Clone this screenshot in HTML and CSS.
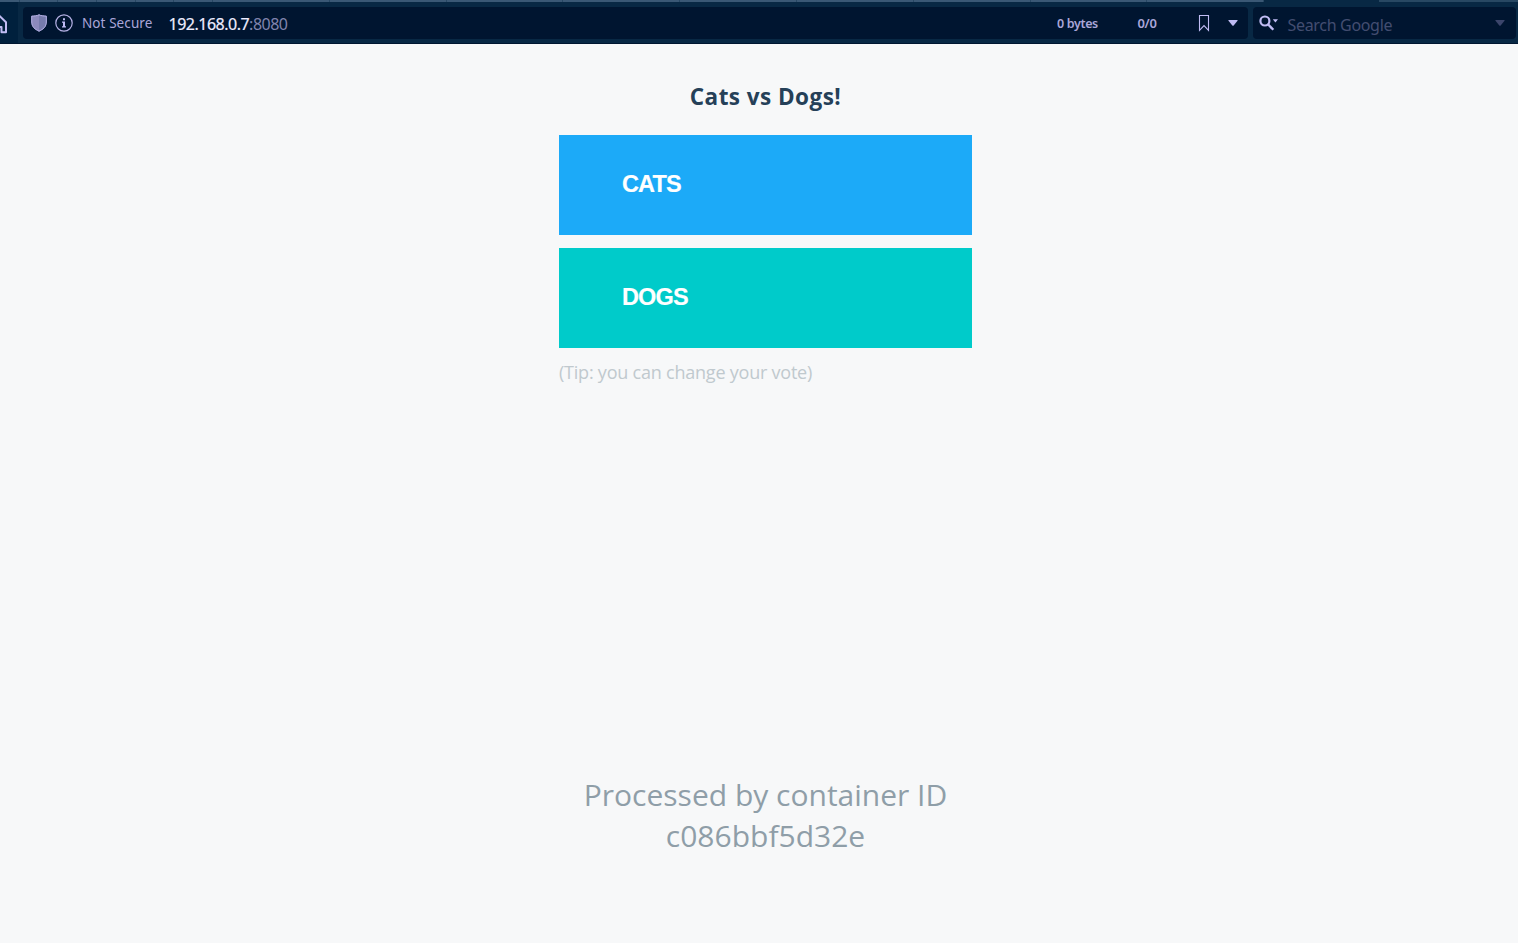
FILE: index.html
```html
<!DOCTYPE html>
<html lang="en">
<head>
<meta charset="utf-8">
<title>Cats vs Dogs!</title>
<link rel="stylesheet" href="styles.css">
</head>
<body>
<header class="chrome">
  <div class="tabs"><i class="pinned"></i><i class="pinned"></i><i class="pinned"></i><i class="pinned"></i><i class="pinned"></i><i class="pinned"></i><i></i><i></i><i></i><i></i><i></i><i></i><i></i><i></i><i></i><b class="active"></b><b class="rest"></b></div>
  <div class="toolbar">
    <div class="home"><svg width="18" height="36" viewBox="0 0 18 36"><path d="M-8 17L-1 9.300L6 16.300V26.200H1.500V21H-1" fill="none" stroke="#c0bcf4" stroke-width="2" stroke-linejoin="round"/></svg></div>
    <div class="address">
      <svg class="shield" width="16" height="18" viewBox="0 0 16 18"><path d="M8 .5C6 1.500 3.500 1.900.5 1.900V8C.5 13 4 15.500 8 17.400C12 15.500 15.500 13 15.500 8V1.900C12.500 1.900 10 1.500 8 .5Z" fill="#8c8abc"/><path d="M8 .5V17.400C12 15.500 15.500 13 15.500 8V1.900C12.500 1.900 10 1.500 8 .5Z" fill="#767bac"/><path d="M8 .8C6 1.800 3.500 2.100.7 2.100V8C.7 13 4 15.300 8 17.200C12 15.300 15.300 13 15.300 8V2.100C12.500 2.100 10 1.800 8 .8Z" fill="none" stroke="#b5b1e5" stroke-width="1"/></svg>
      <svg class="info" width="18" height="18" viewBox="0 0 18 18"><circle cx="9" cy="9" r="8.200" fill="none" stroke="#b5b1e5" stroke-width="1.200"/><path d="M8 4.300h2v2H8zM7 7.500h3v4.700h1v1.200H7v-1.200h1V8.700H7z" fill="#c0bcf4"/></svg>
      <span class="secure">Not Secure</span>
      <span class="url"><span class="host">192.168.0.7</span>:8080</span>
      <span class="stat bytes">0 bytes</span>
      <span class="stat count">0/0</span>
      <svg class="mark" width="12" height="18" viewBox="0 0 12 18"><path d="M1.500 1.500H10.500V16.300L6 11.600L1.500 16.300Z" fill="none" stroke="#c0bcf4" stroke-width="1.100"/></svg>
      <svg class="caret" width="10" height="6" viewBox="0 0 10 6"><path d="M.8 0H9.200Q10 0 9.500.7L5.700 5.400Q5 6.100 4.300 5.400L.5.700Q0 0 .8 0Z" fill="#c0bcf4"/></svg>
    </div>
    <div class="search">
      <svg class="glass" width="20" height="17" viewBox="0 0 20 17"><circle cx="5.900" cy="6" r="4.500" fill="none" stroke="#c0bcf4" stroke-width="2.200"/><path d="M9 9.200L14.300 14.800" stroke="#c0bcf4" stroke-width="2.400"/><path d="M13.800 4.300H19L16.400 7.600Z" fill="#c0bcf4"/></svg>
      <span class="hint">Search Google</span>
      <svg class="caret" width="10" height="6" viewBox="0 0 10 6"><path d="M.8 0H9.200Q10 0 9.500.7L5.700 5.400Q5 6.100 4.300 5.400L.5.700Q0 0 .8 0Z" fill="#3b456b"/></svg>
    </div>
  </div>
</header>
<main class="page">
  <h3 class="title">Cats vs Dogs!</h3>
  <form class="choices">
    <button type="button" class="choice cats">CATS</button>
    <button type="button" class="choice dogs">DOGS</button>
  </form>
  <p class="tip">(Tip: you can change your vote)</p>
  <p class="container-id">Processed by container ID<br>c086bbf5d32e</p>
</main>
</body>
</html>
```
FILE: styles.css
```css
* { box-sizing: border-box; }
body { margin: 0; height: 943px; overflow: hidden; background: #f7f8f9; font-family: "Open Sans", sans-serif; }
svg { display: block; flex: none; }
.chrome { height: 44px; background: #082844; border-bottom: 1px solid #001630; display: flex; flex-direction: column; }
.tabs { height: 2px; display: flex; background: #082844; }
.tabs i { width: 116.800px; flex: none; background: #3a5875; border-right: 1px solid #274763; }
.tabs i.pinned { width: 38.700px; }
.tabs i.pinned:first-child { width: 19.500px; }
.tabs .active { width: 115px; }
.tabs .rest { flex: 1; background: #284863; }
.toolbar { height: 41px; display: flex; align-items: flex-start; padding-right: 2px; }
.home { width: 18px; height: 41px; background: #00203d; margin-right: 5px; padding-top: 4px; }
.address, .search { height: 32px; margin-top: 5px; border-radius: 4px; background: #001530; display: flex; align-items: center; white-space: nowrap; }
.address { width: 1225px; padding-left: 8px; }
.info { margin-left: 8px; }
.secure { width: 87px; margin-left: 9px; font: 13.500px "Noto Sans", sans-serif; color: #aaa6d8; letter-spacing: .08px; }
.url { width: 888.500px; margin-left: -.5px; font: 16px "Noto Sans", sans-serif; letter-spacing: -.5px; color: #8184ad; padding-top: 2px; }
.host { color: #eeedff; -webkit-text-stroke: .2px #eeedff; }
.stat { font: 600 12.500px "Noto Sans", sans-serif; color: #aaa6d8; letter-spacing: -.35px; }
.bytes { width: 80.500px; }
.count { width: 60.500px; font-size: 13px; }
.address .caret { margin-left: 17.500px; }
.search { width: 263px; margin-left: 5px; padding-left: 6px; }
.hint { margin-left: 8.500px; flex: 1; font: 16px "Noto Sans", sans-serif; letter-spacing: -.32px; color: #434d70; padding-top: 3px; }
.search .caret { margin-right: 11.500px; }
.page { width: 413px; margin-left: 559px; display: flex; flex-direction: column; }
.title { margin: 36px 0 22px; font-size: 22.500px; line-height: 33px; font-weight: 700; letter-spacing: .45px; text-align: center; color: #254058; }
.choices { display: flex; flex-direction: column; gap: 13px; }
.choice { height: 100px; border: 0; padding: 0 0 2px 63px; text-align: left; color: #fff; font: bold 23.500px "Liberation Sans", sans-serif; letter-spacing: -.85px; -webkit-text-stroke: .2px #fff; }
.cats { background: #1caaf8; }
.dogs { background: #00cbca; }
.tip { margin: 12px 0 0; font-size: 18px; line-height: 25px; letter-spacing: -.22px; color: #c0c9ce; }
.container-id { margin: 389px 0 0; font-size: 30px; line-height: 41px; text-align: center; color: #8f9ea8; }
```
